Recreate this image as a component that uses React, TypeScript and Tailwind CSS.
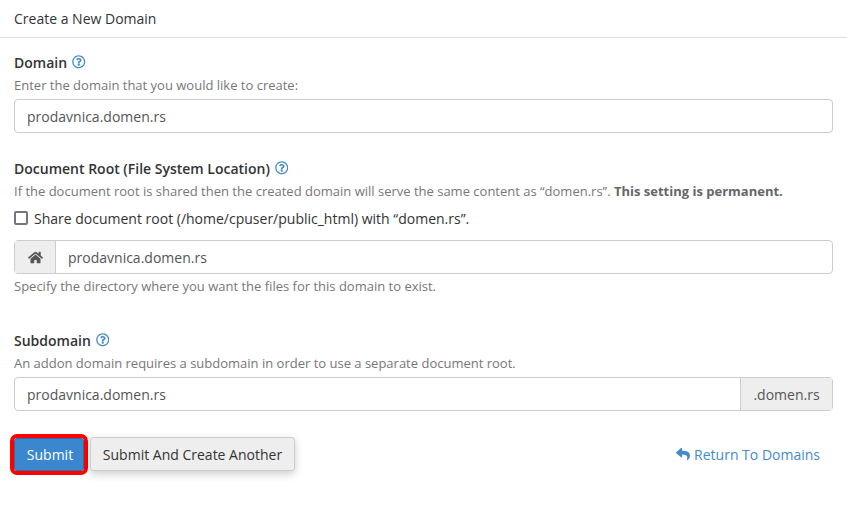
import { FaHome, FaRegQuestionCircle, FaReply } from "react-icons/fa"

function Label({ children }: { children: React.ReactNode }) {
    return (
        <div className="flex h-[20px] items-center text-[14px] font-semibold text-[#333]">
            {children}
            <FaRegQuestionCircle className="ml-[5px] h-[13.5px] w-[13.5px] text-[#428bca]" />
        </div>
    )
}

function Hint({ children, className }: { children: React.ReactNode; className?: string }) {
    return <p className={`h-[20px] text-[13px] leading-[20px] text-[#777] ${className ?? ""}`}>{children}</p>
}

export default function App() {
    return (
        <div className="h-[510px] w-[847px] overflow-hidden bg-white font-['Open_Sans',sans-serif] text-[14px] text-[#333]">
            <div className="flex h-[38px] items-center border-b border-[#ddd] pb-[1px] pl-[14px] text-[14px]">
                Create a New Domain
            </div>

            <div className="px-[14px] pt-[14px]">
                <Label>Domain</Label>
                <Hint className="mt-[3px]">Enter the domain that you would like to create:</Hint>
                <div className="mt-[4px] flex h-[34px] w-[819px] items-center rounded border border-[#ccc] bg-white px-[12px] text-[14px] text-[#555]">
                    prodavnica.domen.rs
                </div>

                <div className="mt-[25px]">
                    <Label>Document Root (File System Location)</Label>
                </div>
                <Hint className="mt-[3px]">
                    If the document root is shared then the created domain will serve the same content as “domen.rs”.{" "}
                    <strong className="font-bold text-[#666]">This setting is permanent.</strong>
                </Hint>
                <label className="mt-[7px] flex h-[20px] items-center text-[14px]">
                    <span className="h-[14px] w-[14px] rounded-[2px] border-2 border-[#767680] bg-white" />
                    <span className="ml-[6px]">Share document root (/home/cpuser/public_html) with “domen.rs”.</span>
                </label>
                <div className="mt-[12px] flex h-[34px] w-[819px] rounded border border-[#ccc] text-[14px]">
                    <div className="flex w-[41px] items-center justify-center border-r border-[#ccc] bg-[#eee] text-[#555]">
                        <FaHome className="h-[15px] w-[15px]" />
                    </div>
                    <div className="flex flex-1 items-center px-[12px] text-[#555]">prodavnica.domen.rs</div>
                </div>
                <Hint className="mt-[2px]">Specify the directory where you want the files for this domain to exist.</Hint>

                <div className="mt-[34px]">
                    <Label>Subdomain</Label>
                </div>
                <Hint className="mt-[3px]">An addon domain requires a subdomain in order to use a separate document root.</Hint>
                <div className="mt-[4px] flex h-[34px] w-[819px] rounded border border-[#ccc] text-[14px] text-[#555]">
                    <div className="flex flex-1 items-center px-[12px]">prodavnica.domen.rs</div>
                    <div className="flex w-[92px] items-center justify-center border-l border-[#ccc] bg-[#eee]">.domen.rs</div>
                </div>

                <div className="mt-[26px] flex items-center">
                    <button className="h-[33px] w-[70px] rounded-[3px] border border-[#2e6da4] bg-[#3a87cf] pl-[2px] text-[14px] text-white outline-[4px] outline-[#f00] [outline-style:solid]">
                        Submit
                    </button>
                    <button className="ml-[6px] h-[34px] w-[205px] rounded-[3px] border border-[#ccc] bg-[#eee] text-[14px] text-[#333] shadow-[0_3px_8px_rgba(0,0,0,0.2)]">
                        Submit And Create Another
                    </button>
                    <a className="ml-auto mr-[13px] flex items-center text-[14px] text-[#428bca]">
                        <FaReply className="mr-[4px] h-[14px] w-[14px]" />
                        Return To Domains
                    </a>
                </div>
            </div>
        </div>
    )
}
